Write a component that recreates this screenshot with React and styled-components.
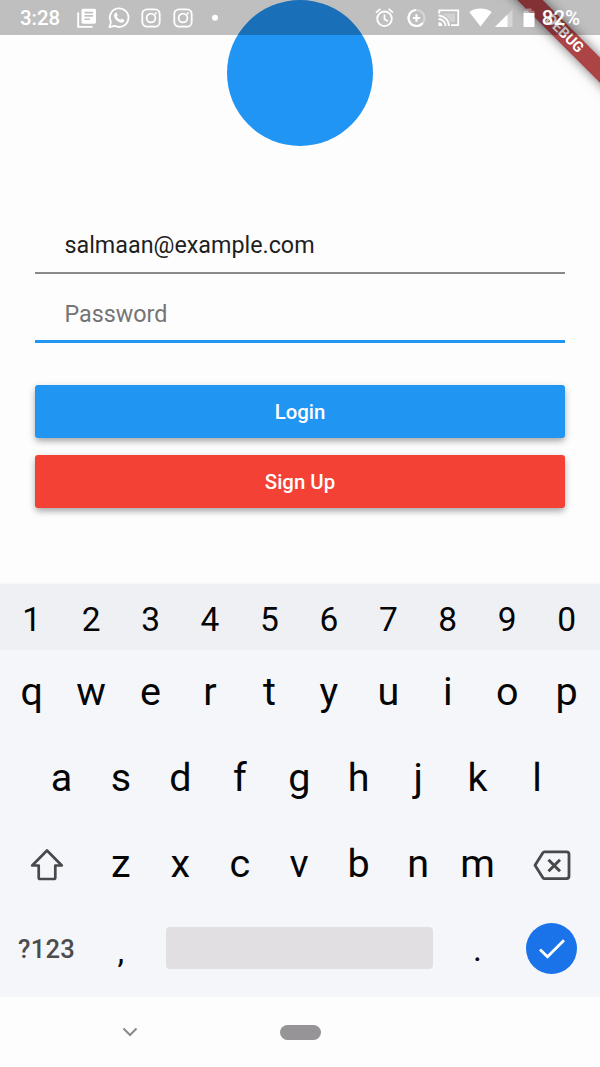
import React from "react";
import styled, { createGlobalStyle } from "styled-components";

const GlobalStyle = createGlobalStyle`
  * { box-sizing: border-box; }
  body { margin: 0; background: #fefdfe; font-family: Roboto, "Liberation Sans", sans-serif; }
`;

const Screen = styled.div`
  position: relative;
  display: flex;
  flex-direction: column;
  width: 600px;
  height: 1067px;
  overflow: hidden;
  background: #fefdfe;
`;

const StatusBar = styled.header`
  position: absolute;
  inset: 0 0 auto 0;
  z-index: 3;
  height: 35px;
  padding: 0 20px;
  display: flex;
  justify-content: space-between;
  align-items: center;
  background: rgba(0, 0, 0, 0.245);
  color: #fff;
`;

const StatusGroup = styled.div`
  display: flex;
  align-items: center;
  height: 35px;
`;

const StatusText = styled.span`
  font-size: 20.4px;
  font-weight: 500;
  line-height: 35px;
  padding-top: 1px;
  margin-left: ${(p) => p.$gap || 0}px;
`;

const StatusIcon = styled.svg`
  display: block;
  flex: none;
  width: ${(p) => p.$w || 22}px;
  height: 22px;
  margin-left: ${(p) => p.$gap || 0}px;
  overflow: visible;
`;

const RibbonClip = styled.div`
  position: absolute;
  top: 0;
  right: 0;
  z-index: 2;
  width: 120px;
  height: 120px;
  overflow: hidden;
`;

const Ribbon = styled.div`
  position: absolute;
  top: 26px;
  left: 5.3px;
  width: 160px;
  height: 17.5px;
  padding-right: 2px;
  transform: rotate(45deg);
  background: #ac4345;
  box-shadow: 0 0 12px rgba(0, 0, 0, 0.55);
  color: #fff;
  font-size: 14.6px;
  font-weight: 700;
  line-height: 17.5px;
  text-align: center;
`;

const Form = styled.main`
  height: 584px;
  padding: 0 35px;
  display: flex;
  flex-direction: column;
`;

const Logo = styled.div`
  width: 146px;
  height: 146px;
  margin: 0 auto 70px;
  border-radius: 50%;
  background: #2195f3;
`;

const Field = styled.div`
  height: ${(p) => (p.$focused ? 69 : 58)}px;
  padding: ${(p) => (p.$focused ? 25 : 14)}px 29.5px 0;
  border-bottom: ${(p) => (p.$focused ? "3px solid #2196f3" : "2px solid #8b898b")};
  color: ${(p) => (p.$focused ? "#757475" : "#1f1f1f")};
  font-size: 23.3px;
  line-height: 30px;
`;

const Button = styled.button`
  height: 53px;
  margin: ${(p) => p.$top}px 0 0;
  padding: 0;
  border: 0;
  border-radius: 3px;
  background: ${(p) => p.$color};
  box-shadow: 0 4px 6px -1px rgba(0, 0, 0, 0.26), 0 2px 8px rgba(0, 0, 0, 0.15);
  color: #fff;
  font: 500 20.4px/54px Roboto, sans-serif;
`;

const Keyboard = styled.section`
  height: 413px;
  background: #f5f6fa;
  color: #050506;
`;

const KeyRow = styled.div`
  display: flex;
  height: ${(p) => p.$h}px;
  padding: 0 ${(p) => (p.$inset || 0) + 3.6}px 0 ${(p) => (p.$inset || 0) + 2}px;
  background: ${(p) => (p.$digits ? "#eff0f4" : "transparent")};
  box-shadow: ${(p) => (p.$digits ? "0 -1px 2px rgba(0, 0, 0, 0.04)" : "none")};
  font-size: ${(p) => (p.$digits ? 33.5 : 39.5)}px;
`;

const Key = styled.div`
  flex: ${(p) => p.$span || 1} 1 0;
  min-width: 0;
  display: flex;
  align-items: center;
  justify-content: center;
  padding-top: ${(p) => p.$drop || 0}px;
  padding-bottom: ${(p) => p.$lift || 0}px;
`;

const SymbolsLabel = styled.span`
  color: #4c4c4e;
  font-size: 25.5px;
  font-weight: 500;
  letter-spacing: 0.3px;
`;

const Punctuation = styled.span`
  font-size: 34px;
`;

const SpaceBar = styled.div`
  width: 267px;
  height: 42px;
  border-radius: 4px;
  background: #e1dfe1;
`;

const Enter = styled.div`
  display: grid;
  place-items: center;
  width: 51px;
  height: 51px;
  border-radius: 50%;
  background: #1a73e8;
`;

const NavBar = styled.nav`
  height: 70px;
  display: flex;
  align-items: center;
  padding-left: 122px;
`;

const HomePill = styled.div`
  width: 41px;
  height: 15px;
  margin-left: 141.5px;
  border-radius: 8px;
  background: #969496;
`;

const Instagram = ({ gap }) => (
  <StatusIcon $w={20} $gap={gap} viewBox="0 0 20 22" fill="none" stroke="#fff" strokeWidth="1.8">
    <rect x="1.3" y="2.3" width="17.4" height="17.4" rx="4.8" />
    <circle cx="10" cy="11" r="4.4" />
    <circle cx="14.8" cy="6.4" r="1.1" fill="#fff" stroke="none" />
  </StatusIcon>
);

const Keys = ({ letters, drop, lift }) =>
  letters.split("").map((c) => (
    <Key key={c} $span={2} $drop={drop} $lift={lift}>
      {c}
    </Key>
  ));

export default function App() {
  return (
    <Screen>
      <GlobalStyle />
      <StatusBar>
        <StatusGroup>
          <StatusText>3:28</StatusText>
          <StatusIcon $w={20} $gap={17.3} viewBox="0 0 20 22">
            <path d="M1.200 5.600v14.300h14.400" fill="none" stroke="#fff" strokeWidth="1.9" />
            <path fill="#fff" fillRule="evenodd" d="M6.100 1.800h11.300c1 0 1.600.7 1.600 1.600v11.700c0 1-.7 1.600-1.600 1.600H6.100c-1 0-1.600-.7-1.600-1.600V3.400c0-1 .7-1.600 1.600-1.600zM7.500 4.800v1.600h8.500V4.800zm0 3.300v1.600h8.500V8.100zm0 3.300V13h5.500v-1.600z" />
          </StatusIcon>
          <StatusIcon $w={22} $gap={11} viewBox="0 0 22 22">
            <path d="M1.500 20.200 3 15.100A9.300 9.300 0 1 1 6.700 18.800Z" fill="none" stroke="#fff" strokeWidth="1.8" strokeLinejoin="round" />
            <path fill="#fff" d="M7.600 5.700c.5-.2 1-.1 1.200.4l.8 1.900c.1.3 0 .6-.8 1.500.8 1.500 2 2.600 3.700 3.300.8-1 1-1.300 1.400-1.100l2 1c.5.3.4 1.100 0 1.800-.8 1.200-2.400 1.500-4.200.8-2.700-1-4.900-3.300-5.500-5.500-.6-1.700.1-3.500 1.400-4.100z" />
          </StatusIcon>
          <Instagram gap={11} />
          <Instagram gap={12} />
          <StatusIcon $w={6} $gap={19} viewBox="0 0 6 22">
            <circle cx="3" cy="10.800" r="3" fill="#fff" />
          </StatusIcon>
        </StatusGroup>
        <StatusGroup>
          <StatusIcon $w={19} viewBox="0 0 19 22" fill="none" stroke="#fff" strokeWidth="1.8">
            <circle cx="9.5" cy="11.8" r="7.3" />
            <path d="M9.5 7.500v4.700l3.400 2M1 5.600l4.400-3.700M18 5.600l-4.400-3.700" />
          </StatusIcon>
          <StatusIcon $w={19} $gap={13} viewBox="0 0 19 22" fill="none" stroke="#fff" strokeWidth="2.2">
            <circle cx="9.5" cy="11" r="8" strokeOpacity=".35" />
            <path d="M9 3a8 8 0 1 0 6.800 13M9.500 7.300v7.400M5.800 11h7.400" />
          </StatusIcon>
          <StatusIcon $w={22} $gap={12} viewBox="0 0 22 22" fill="none" stroke="#fff" strokeWidth="1.8">
            <path d="M1.300 6.800V3.400h18.900v14.800h-7.200" />
            <path d="M.5 8.600a10.500 10.500 0 0 1 10.500 10.500M.5 12a7.100 7.100 0 0 1 7.100 7.100" />
            <path d="M.5 15.200a3.900 3.900 0 0 1 3.900 3.900H.5z" fill="#fff" stroke="none" />
            <path d="M4.500 6.600h12.600v8.500h-4.800C10.600 11 8 8.500 4.500 7.200z" fill="#fff" fillOpacity=".3" stroke="none" />
          </StatusIcon>
          <StatusIcon $w={23} $gap={8.500} viewBox="0 0 23 22">
            <path d="M11.500 19.500.3 4.900C6.500.4 16.500.4 22.700 4.900z" fill="#fff" />
          </StatusIcon>
          <StatusIcon $w={18} $gap={3} viewBox="0 0 18 22">
            <path d="M0 20 17.500 2.500V20z" fill="#fff" fillOpacity=".35" />
            <path d="M0 20 12.500 7.500V20z" fill="#fff" />
          </StatusIcon>
          <StatusIcon $w={12} $gap={10.500} viewBox="0 0 12 22">
            <path d="M3.500 1.500h5v2.200h2.200c.5 0 .8.3.8.8V6H.5V4.500c0-.5.3-.8.8-.8h2.200z" fill="#fff" fillOpacity=".35" />
            <path d="M.5 6h11v13.200c0 .5-.3.8-.8.8H1.300c-.5 0-.8-.3-.8-.8z" fill="#fff" />
          </StatusIcon>
          <StatusText $gap={6.5}>82%</StatusText>
        </StatusGroup>
      </StatusBar>
      <RibbonClip>
        <Ribbon>DEBUG</Ribbon>
      </RibbonClip>
      <Form>
        <Logo />
        <Field>salmaan@example.com</Field>
        <Field $focused>Password</Field>
        <Button $top={42} $color="#2195f2">Login</Button>
        <Button $top={17} $color="#f34135">Sign Up</Button>
      </Form>
      <Keyboard>
        <KeyRow $digits $h={66}><Keys letters="1234567890" drop={5} /></KeyRow>
        <KeyRow $h={86}><Keys letters="qwertyuiop" lift={4} /></KeyRow>
        <KeyRow $h={86} $inset={29.7}><Keys letters="asdfghjkl" lift={4} /></KeyRow>
        <KeyRow $h={86}>
          <Key $span={3}>
            <svg width="34" height="34" viewBox="0 0 34 34" fill="none" stroke="#49494b" strokeWidth="2.7" strokeLinejoin="round">
              <path d="M17 2.500 2.200 17.500H8.700V29.500Q8.700 31 10.200 31H23.800Q25.300 31 25.300 29.500V17.500H31.800Z" />
            </svg>
          </Key>
          <Keys letters="zxcvbnm" lift={4} />
          <Key $span={3}>
            <svg width="38" height="32" viewBox="0 0 38 32" fill="none" stroke="#49494b" strokeWidth="2.8" strokeLinejoin="round">
              <path d="M11.500 2.800H33.500Q36 2.800 36 5.300V27.100Q36 29.600 33.500 29.600H11.500Q10.500 29.600 9.900 28.700L2 16.200L9.900 3.700Q10.500 2.800 11.500 2.800Z" />
              <path d="M15.500 10.700 27 22.200M27 10.700 15.500 22.200" strokeWidth="3" />
            </svg>
          </Key>
        </KeyRow>
        <KeyRow $h={89}>
          <Key $span={3} $lift={8}><SymbolsLabel>?123</SymbolsLabel></Key>
          <Key $span={2} $lift={3}><Punctuation>,</Punctuation></Key>
          <Key $span={10} $lift={9}><SpaceBar /></Key>
          <Key $span={2} $lift={7}><Punctuation>.</Punctuation></Key>
          <Key $span={3} $lift={8}>
            <Enter>
              <svg width="28" height="24" viewBox="0 0 28 24" fill="none" stroke="#fff" strokeWidth="2.8">
                <path d="M2 12.500 9.500 19.800 26 3.300" />
              </svg>
            </Enter>
          </Key>
        </KeyRow>
      </Keyboard>
      <NavBar>
        <svg width="16" height="10" viewBox="0 0 16 10" fill="none" stroke="#8b898b" strokeWidth="2">
          <path d="M1.500 1.500 8 8l6.500-6.500" />
        </svg>
        <HomePill />
      </NavBar>
    </Screen>
  );
}
